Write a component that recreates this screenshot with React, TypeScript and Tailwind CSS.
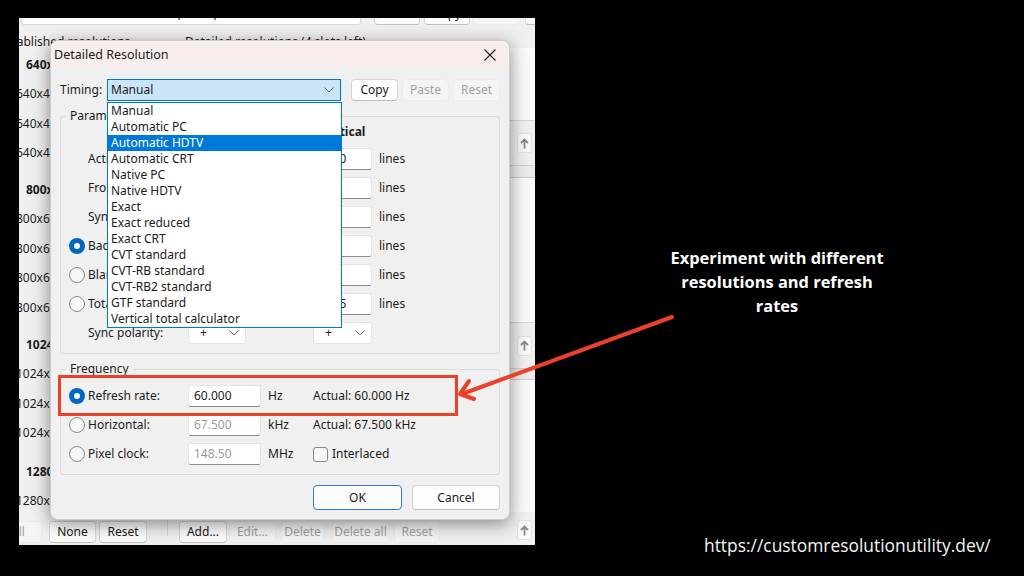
import React from "react"

type BtnProps = {
  children: React.ReactNode
  className?: string
  disabled?: boolean
  primary?: boolean
}

function Btn({ children, className = "", disabled, primary }: BtnProps) {
  const tone = disabled
    ? "bg-[#f5f5f5] border-[#ececec] text-[#a2a2a2]"
    : primary
      ? "bg-[#fdfdfd] border-[#2a7fd4] text-[#1b1b1b]"
      : "bg-[#fdfdfd] border-[#d6d6d6] border-b-[#bdbdbd] text-[#1b1b1b]"
  return (
    <div
      className={`h-[22px] shrink-0 border rounded-[4px] flex items-center justify-center leading-none ${tone} ${className}`}
    >
      {children}
    </div>
  )
}

function Chevron() {
  return (
    <svg width="10" height="6" viewBox="0 0 10 6" className="shrink-0">
      <polyline points="0.5,0.5 5,5 9.5,0.5" fill="none" stroke="#6b6b6b" strokeWidth="1" />
    </svg>
  )
}

function UpArrow() {
  return (
    <div className="w-[15px] h-[20px] bg-[#f9f9f9] border border-[#e2e2e2] rounded-[3px] flex items-center justify-center">
      <svg width="9" height="11" viewBox="0 0 9 11">
        <path d="M4.5 10.5V1.5M1 5L4.5 1.5L8 5" fill="none" stroke="#8a8a8a" strokeWidth="1.8" />
      </svg>
    </div>
  )
}

function Radio({ on }: { on?: boolean }) {
  if (on) {
    return (
      <span className="w-[16px] h-[16px] rounded-full bg-[#0067c0] flex items-center justify-center shrink-0">
        <span className="w-[6px] h-[6px] rounded-full bg-white" />
      </span>
    )
  }
  return <span className="w-[16px] h-[16px] rounded-full border border-[#8a8a8a] bg-[#f7f7f7] shrink-0" />
}

function Field({ value = "", className = "", dim }: { value?: string; className?: string; dim?: boolean }) {
  return (
    <div
      className={`h-[22px] shrink-0 bg-white border border-[#e4e4e4] border-b-[#8c8c8c] rounded-[3px] flex items-center pl-[5px] ${dim ? "text-[#9c9c9c]" : ""} ${className}`}
    >
      {value}
    </div>
  )
}

function Select({ className = "" }: { className?: string }) {
  return (
    <div
      className={`h-[22px] shrink-0 bg-white border border-[#e4e4e4] rounded-[3px] flex items-center justify-between pl-[11px] pr-[6px] ${className}`}
    >
      <span>+</span>
      <Chevron />
    </div>
  )
}

const timings = [
  "Manual",
  "Automatic PC",
  "Automatic HDTV",
  "Automatic CRT",
  "Native PC",
  "Native HDTV",
  "Exact",
  "Exact reduced",
  "Exact CRT",
  "CVT standard",
  "CVT-RB standard",
  "CVT-RB2 standard",
  "GTF standard",
  "Vertical total calculator",
]

const paramRows = [
  { label: "Active:", radio: null, h: "1920", v: "1080" },
  { label: "Front porch:", radio: null, h: "88", v: "4" },
  { label: "Sync width:", radio: null, h: "44", v: "5" },
  { label: "Back porch:", radio: true, h: "148", v: "36" },
  { label: "Blanking:", radio: false, h: "280", v: "45" },
  { label: "Total:", radio: false, h: "2200", v: "1125" },
]

const groups = [
  { head: "640x480", items: ["640x480 @ 60 Hz", "640x480 @ 72 Hz", "640x480 @ 75 Hz"], gap: "mt-0" },
  { head: "800x600", items: ["800x600 @ 56 Hz", "800x600 @ 60 Hz", "800x600 @ 72 Hz", "800x600 @ 75 Hz"], gap: "mt-[7px]" },
  { head: "1024x768", items: ["1024x768 @ 60 Hz", "1024x768 @ 70 Hz", "1024x768 @ 75 Hz"], gap: "mt-[7.5px]" },
  { head: "1280x1024", items: ["1280x1024 @ 75 Hz"], gap: "mt-[9px]" },
]

function Dialog() {
  return (
    <div className="absolute left-[31px] top-[22px] w-[460px] h-[480px] rounded-[8px] bg-[#f0f0f0] border border-[#cdcdcd] shadow-[0_4px_18px_rgba(0,0,0,0.45)] flex flex-col">
      <div className="h-[27px] shrink-0 rounded-t-[8px] bg-[#f8efed] flex items-center justify-between pl-[3px] pr-[13px]">
        <span className="text-[12.5px] pt-[1px]">Detailed Resolution</span>
        <svg width="12" height="12" viewBox="0 0 12 12">
          <path d="M0.5 0.5L11.5 11.5M11.5 0.5L0.5 11.5" stroke="#1b1b1b" strokeWidth="1.1" />
        </svg>
      </div>

      <div className="px-[9px] pt-[11px] flex flex-col">
        <div className="flex items-center h-[22px]">
          <span className="w-[47px] shrink-0">Timing:</span>
          <div className="w-[234px] h-[22px] shrink-0 bg-[#cce4f7] border border-[#0078d7] flex items-center justify-between pl-[3px] pr-[6px]">
            <span>Manual</span>
            <Chevron />
          </div>
          <Btn className="ml-[10px] w-[47px]">Copy</Btn>
          <Btn className="ml-[4px] w-[47px]" disabled>
            Paste
          </Btn>
          <Btn className="ml-[4px] w-[47px]" disabled>
            Reset
          </Btn>
        </div>

        <fieldset className="mt-[7px] border border-[#dcdcdc] rounded-[3px] pl-[8px] pb-[9px]">
          <legend className="-ml-[3px] px-[4px] leading-[16px]">Parameters</legend>
          <div className="flex h-[16px] items-center font-bold">
            <span className="w-[119px] shrink-0" />
            <span className="w-[58px] shrink-0 flex justify-center whitespace-nowrap">Horizontal</span>
            <span className="w-[67px] shrink-0" />
            <span className="w-[59px] shrink-0 flex justify-center whitespace-nowrap">Vertical</span>
          </div>
          <div className="mt-[8px] flex flex-col gap-[7px]">
            {paramRows.map((r) => (
              <div key={r.label} className="flex items-center h-[22px]">
                <div className="w-[119px] shrink-0 flex items-center gap-[3px]">
                  {r.radio === null ? <span className="w-[16px]" /> : <Radio on={r.radio} />}
                  <span>{r.label}</span>
                </div>
                <Field value={r.h} className="w-[58px]" />
                <span className="w-[67px] shrink-0 pl-[7px]">pixels</span>
                <Field value={r.v} className="w-[59px]" />
                <span className="pl-[7px]">lines</span>
              </div>
            ))}
            <div className="flex items-center h-[22px]">
              <div className="w-[119px] shrink-0 pl-[19px]">Sync polarity:</div>
              <Select className="w-[58px]" />
              <span className="w-[67px] shrink-0" />
              <Select className="w-[59px]" />
            </div>
          </div>
        </fieldset>

        <fieldset className="mt-[7px] border border-[#dcdcdc] rounded-[3px] pl-[8px] pb-[9px]">
          <legend className="-ml-[3px] px-[4px] leading-[16px]">Frequency</legend>
          <div className="mt-[8px] flex flex-col gap-[7px]">
            <div className="flex items-center h-[22px]">
              <div className="w-[119px] shrink-0 flex items-center gap-[3px]">
                <Radio on />
                <span>Refresh rate:</span>
              </div>
              <Field value="60.000" className="w-[73px]" />
              <span className="w-[52px] shrink-0 pl-[7px]">Hz</span>
              <span>Actual: 60.000 Hz</span>
            </div>
            <div className="flex items-center h-[22px]">
              <div className="w-[119px] shrink-0 flex items-center gap-[3px]">
                <Radio />
                <span>Horizontal:</span>
              </div>
              <Field value="67.500" className="w-[73px]" dim />
              <span className="w-[52px] shrink-0 pl-[7px]">kHz</span>
              <span>Actual: 67.500 kHz</span>
            </div>
            <div className="flex items-center h-[22px]">
              <div className="w-[119px] shrink-0 flex items-center gap-[3px]">
                <Radio />
                <span>Pixel clock:</span>
              </div>
              <Field value="148.50" className="w-[73px]" dim />
              <span className="w-[52px] shrink-0 pl-[7px]">MHz</span>
              <span className="w-[15px] h-[15px] rounded-[3px] border border-[#8a8a8a] bg-[#f7f7f7] shrink-0" />
              <span className="ml-[4px]">Interlaced</span>
            </div>
          </div>
        </fieldset>

        <div className="mt-[10px] flex justify-end gap-[10px]">
          <Btn className="w-[89px] h-[25px]" primary>
            OK
          </Btn>
          <Btn className="w-[88px] h-[25px]">Cancel</Btn>
        </div>
      </div>

      {/* open Timing list */}
      <div className="absolute left-[56px] top-[61px] w-[235px] h-[226px] bg-white border border-[#0078d7] flex flex-col">
        {timings.map((t, i) => (
          <div
            key={t}
            className={`h-[16px] shrink-0 flex items-center pl-[3px] leading-none ${i === 2 ? "bg-[#0078d7] text-white" : ""}`}
          >
            {t}
          </div>
        ))}
      </div>

      {/* highlight box */}
      <div className="absolute left-[7px] top-[334px] w-[400px] h-[41px] border-[3px] border-[#ea4129]" />
    </div>
  )
}

function Window() {
  return (
    <div className="relative mt-[18px] ml-[19px] w-[516px] h-[527px] shrink-0 overflow-hidden bg-[#f0f0f0] text-[12px] text-[#1b1b1b] font-['Segoe_UI','Noto_Sans',sans-serif] flex flex-col">
      <div className="-mt-[15px] h-[22px] shrink-0 flex items-center">
        <div className="ml-[2px] w-[340px] h-[22px] shrink-0 bg-white border border-[#dadada] rounded-[3px] flex items-center pl-[4px] whitespace-nowrap overflow-hidden">
          RE2 - Generic PnP Monitor (active)
        </div>
        <Btn className="ml-[13px] w-[46px]">Edit...</Btn>
        <Btn className="ml-[4px] w-[46px]">Copy</Btn>
        <Btn className="ml-[3px] w-[47px]" disabled>
          Paste
        </Btn>
        <Btn className="ml-[5px] w-[46px]">Reset</Btn>
      </div>

      <div className="mt-[7px] h-[16px] shrink-0 flex items-center pt-[4px] whitespace-nowrap">
        <span className="-ml-[19px] w-[185px] shrink-0">Established resolutions</span>
        <span>Detailed resolutions (4 slots left)</span>
      </div>

      <div className="flex-1 flex min-h-0">
        <div className="w-[148px] shrink-0 pt-[2px] flex flex-col whitespace-nowrap">
          {groups.map((g) => (
            <div key={g.head} className={`flex flex-col ${g.gap}`}>
              <div className="h-[29.5px] flex items-center pl-[7px] font-bold">{g.head}</div>
              {g.items.map((it) => (
                <div key={it} className="h-[29.5px] flex items-center -ml-[3px]">
                  {it}
                </div>
              ))}
            </div>
          ))}
        </div>
        <div className="flex-1 flex flex-col border-l border-[#d8d8d8]">
          <div className="h-[73px] bg-[#fafafa] border-b border-[#d4d4d4]" />
          <div className="h-[44px] flex items-center justify-end pr-[3px]">
            <UpArrow />
          </div>
          <div className="h-[13px] bg-[#ececec] border-y border-[#cfcfcf]" />
          <div className="h-[145px] bg-[#fafafa] border-b border-[#d4d4d4]" />
          <div className="h-[45px] flex items-center justify-end pr-[3px]">
            <UpArrow />
          </div>
          <div className="h-[12px] bg-[#ececec] border-y border-[#cfcfcf]" />
          <div className="h-[132px] bg-[#fafafa]" />
        </div>
      </div>

      <div className="h-[33px] shrink-0 flex items-start pt-[9px]">
        <Btn className="-ml-[25px] w-[48px]" disabled>
          All
        </Btn>
        <Btn className="ml-[7px] w-[47px]">None</Btn>
        <Btn className="ml-[3px] w-[48px]">Reset</Btn>
        <div className="ml-[20px] h-[24px] -mt-[9px] border-l border-[#d8d8d8]" />
        <Btn className="ml-[11px] w-[48px]">Add...</Btn>
        <Btn className="ml-[2px] w-[47px]" disabled>
          Edit...
        </Btn>
        <Btn className="ml-[5px] w-[43px]" disabled>
          Delete
        </Btn>
        <Btn className="ml-[8px] w-[57px]" disabled>
          Delete all
        </Btn>
        <Btn className="ml-[5px] w-[46px]" disabled>
          Reset
        </Btn>
        <div className="ml-auto mr-[3px] -mt-[1px]">
          <UpArrow />
        </div>
      </div>

      <Dialog />
    </div>
  )
}

export default function App() {
  return (
    <div className="relative w-[1024px] h-[576px] bg-black flex overflow-hidden">
      <Window />

      <div className="flex-1 flex flex-col pr-[5px]">
        <p className="pt-[246px] text-center text-white font-['Open_Sans',sans-serif] font-bold text-[16.4px] leading-[24px]">
          Experiment with different
          <br />
          resolutions and refresh
          <br />
          rates
        </p>
        <p className="mt-auto mb-[20px] ml-[169px] text-[#f4f4f4] font-['Open_Sans',sans-serif] text-[17.4px] leading-[22px] whitespace-nowrap">
          https://customresolutionutility.dev/
        </p>
      </div>

      <svg className="absolute left-0 top-0 pointer-events-none" width="1024" height="576" viewBox="0 0 1024 576">
        <g fill="none" stroke="#ea4129" strokeWidth="4" strokeLinecap="round" strokeLinejoin="round">
          <line x1="672" y1="317" x2="462" y2="394" />
          <polyline points="469,381 460,394 474,399" />
        </g>
      </svg>
    </div>
  )
}
